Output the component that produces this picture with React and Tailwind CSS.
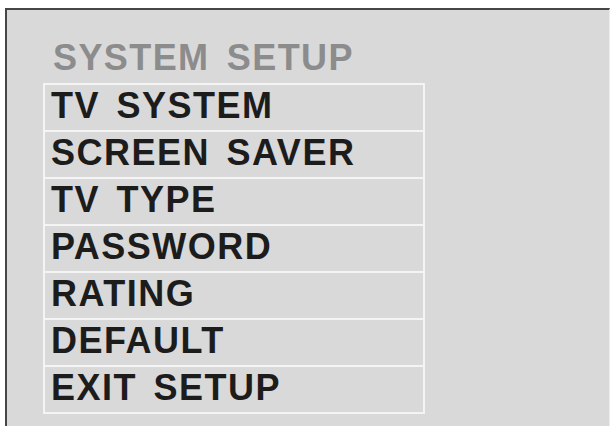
import React from 'react';

const ITEMS = [
    'TV SYSTEM',
    'SCREEN SAVER',
    'TV TYPE',
    'PASSWORD',
    'RATING',
    'DEFAULT',
    'EXIT SETUP'
];

const SetupMenu = () => {
    return (
        <div className="border-2 border-[#f4f4f4]">
            {ITEMS.map((item, i) => (
                <div
                    key={item}
                    className={`pl-[6px] text-[36px] leading-[41px] font-bold tracking-[1.5px] [word-spacing:5px] text-[#1c1c1c] ${i > 0 ? 'h-[47px] border-t-2 border-[#f4f4f4]' : 'h-[45px]'}`}
                >
                    {item}
                </div>
            ))}
        </div>
    );
};

export default function App() {
    return (
        <div
            className="w-[615px] h-[426px] overflow-hidden bg-white pt-[8px] pl-[5px]"
            style={{ fontFamily: '"Liberation Sans", Arial, sans-serif' }}
        >
            <div className="w-[605px] h-[430px] bg-[#d9d9d9] border-l-2 border-t-2 border-r border-l-[#464646] border-t-[#464646] border-r-[#ececec] pt-[30px] pl-[36px]">
                <div className="h-[36px] pl-[10px] text-[36px] leading-[36px] font-bold tracking-[1.4px] [word-spacing:6px] text-[#8c8c8c]">
                    SYSTEM SETUP
                </div>
                <div className="mt-[7px] w-[382px]">
                    <SetupMenu />
                </div>
            </div>
        </div>
    );
}
